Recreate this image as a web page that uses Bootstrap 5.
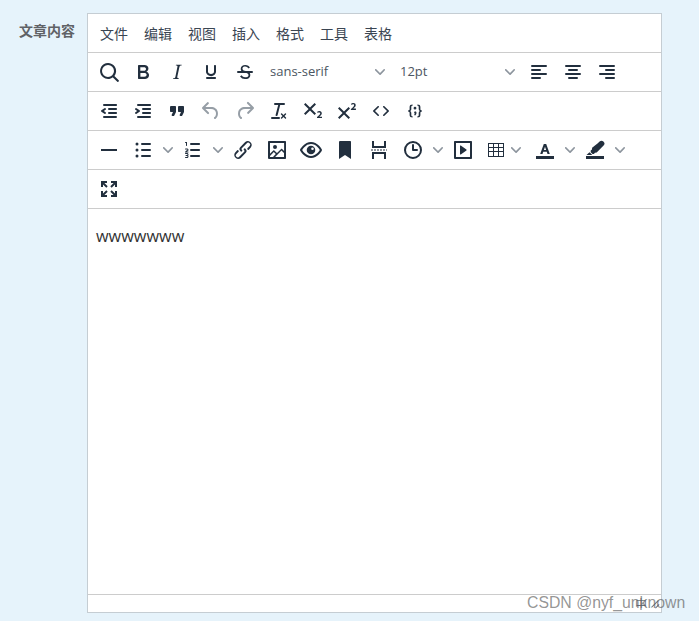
<!DOCTYPE html>
<html lang="zh">
<head>
    <meta charset="UTF-8">
    <title>文章内容</title>
    <link rel="stylesheet" href="https://cdn.jsdelivr.net/npm/bootstrap@5.3.3/dist/css/bootstrap.min.css">
    <style>
        html, body {
            height: 100%;
            overflow: hidden;
        }
        body {
            background: #e6f3fb;
            font-family: "Open Sans", "Noto Sans CJK SC", sans-serif;
            color: #222f3e;
        }
        .form-wrap {
            padding-top: 13px;
            width: 662px;
            height: 621px;
        }
        .field-label {
            width: 87px;
            flex: none;
            padding: 8px 12px 0 0;
            text-align: right;
            font-size: 14px;
            line-height: 18px;
            font-weight: 700;
            color: #606266;
            font-family: "Noto Sans CJK SC", sans-serif;
        }
        .editor-box {
            width: 575px;
            height: 600px;
            border: 1px solid #c5cdd3;
            background: #fff;
        }
        .menu-row {
            height: 39px;
            padding-left: 4px;
            border-bottom: 1px solid #ccc;
            font-family: "Noto Sans CJK SC", sans-serif;
            font-size: 14px;
            color: #3a4552;
        }
        .menu-row span {
            padding: 0 8px;
            line-height: 38px;
            width: 44px;
        }
        .tool-row {
            height: 39px;
            padding-left: 4px;
            border-bottom: 1px solid #ccc;
        }
        .tool {
            width: 34px;
            height: 38px;
            flex: none;
        }
        .tool svg {
            width: 24px;
            height: 24px;
            fill: #222f3e;
        }
        .tool.off svg {
            fill: #969ea6;
        }
        .caret-btn {
            width: 16px;
            height: 38px;
            flex: none;
        }
        .caret-btn svg, .font-pick svg {
            width: 10px;
            height: 10px;
            fill: #8d959e;
        }
        .font-pick {
            width: 130px;
            height: 38px;
            flex: none;
            padding: 0 7px 0 8px;
            font-size: 13px;
            color: #4b5662;
        }
        .table-pick {
            width: 48px;
            padding: 0 4px;
        }
        .table-pick svg.grid {
            width: 24px;
            height: 24px;
        }
        .table-pick .caret-btn {
            width: 16px;
        }
        .edit-area {
            padding: 16px 8px;
            font-size: 16.3px;
            line-height: 22px;
            color: #333;
        }
        .status-row {
            height: 18px;
            border-top: 1px solid #ccc;
            padding-right: 1px;
            font-family: "Noto Sans CJK SC", sans-serif;
            font-size: 12px;
            line-height: 16px;
            color: #6b7480;
        }
        .status-word {
            margin-right: 3px;
        }
        .status-row svg {
            width: 10px;
            height: 10px;
            fill: #6b7480;
        }
        .watermark {
            position: absolute;
            left: 527px;
            top: 594px;
            font-family: "Liberation Sans", sans-serif;
            font-size: 15.8px;
            line-height: 18px;
            color: rgba(90, 90, 90, .65);
            white-space: nowrap;
        }
    </style>
</head>
<body>
    <div class="form-wrap d-flex">
        <label class="field-label">文章内容</label>
        <div class="editor-box d-flex flex-column">
            <div class="menu-row d-flex flex-shrink-0">
                <span>文件</span><span>编辑</span><span>视图</span><span>插入</span><span>格式</span><span>工具</span><span>表格</span>
            </div>

            <div class="tool-row d-flex flex-shrink-0">
                <div class="tool d-flex align-items-center justify-content-center"><svg viewBox="0 0 24 24"><path d="M16 17.3a8 8 0 1 1 1.4-1.4l4.3 4.4a1 1 0 0 1-1.4 1.4l-4.4-4.3zm-5-.3a6 6 0 1 0 0-12 6 6 0 0 0 0 12z"/></svg></div>
                <div class="tool d-flex align-items-center justify-content-center"><svg viewBox="0 0 24 24"><path d="M7.8 19c-.3 0-.5 0-.6-.2l-.2-.5V5.7c0-.2 0-.4.2-.5l.6-.2h5c1.5 0 2.7.3 3.5 1 .7.6 1.1 1.4 1.1 2.5a3 3 0 0 1-.6 1.9c-.4.6-1 1-1.6 1.2.4.1.9.3 1.3.6s.8.7 1 1.2c.4.4.5 1 .5 1.6 0 1.3-.4 2.3-1.3 3-.8.7-2.1 1-3.8 1H7.8zm5-8.3c.6 0 1.2-.1 1.6-.5.4-.3.6-.7.6-1.3 0-1.1-.8-1.7-2.3-1.7H9.3v3.5h3.4zm.5 6c.7 0 1.3-.1 1.7-.4.4-.4.6-.9.6-1.5s-.2-1-.7-1.4c-.4-.3-1-.4-2-.4H9.4v3.8h4z"/></svg></div>
                <div class="tool d-flex align-items-center justify-content-center"><svg viewBox="0 0 24 24"><path d="M16.7 4.7l-.1.9h-.3c-.6 0-1 0-1.4.3-.3.3-.4.6-.5 1.1l-2.1 9.8v.6c0 .5.4.8 1.4.8h.2l-.2.8H8l.2-.8h.2c1.1 0 1.8-.5 2-1.5l2-9.8.1-.5c0-.6-.4-.8-1.4-.8h-.3l.2-.9h5.8z"/></svg></div>
                <div class="tool d-flex align-items-center justify-content-center"><svg viewBox="0 0 24 24"><path d="M16 5c.6 0 1 .4 1 1v5.5a4 4 0 0 1-.4 1.8l-1 1.4a5.3 5.3 0 0 1-5.5 1 5 5 0 0 1-1.6-1c-.5-.4-.8-.9-1.1-1.4a4 4 0 0 1-.4-1.8V6c0-.6.4-1 1-1s1 .4 1 1v5.5c0 .3 0 .6.2 1l.6.7a3.3 3.3 0 0 0 2.2.8 3.4 3.4 0 0 0 2.2-.8c.3-.2.4-.5.6-.8l.2-.9V6c0-.6.4-1 1-1zM8 17h8c.6 0 1 .4 1 1s-.4 1-1 1H8a1 1 0 0 1 0-2z"/></svg></div>
                <div class="tool d-flex align-items-center justify-content-center"><svg viewBox="0 0 24 24"><path d="M15.6 8.5c-.5-.7-1-1.1-1.3-1.3-.6-.4-1.3-.6-2-.6-2.7 0-2.8 1.7-2.8 2.1 0 1.6 1.8 2 3.2 2.3 4.4.9 4.6 2.8 4.6 3.9 0 1.4-.7 4.1-5 4.1A6.2 6.2 0 0 1 7 16.4l1.5-1.1c.4.6 1.6 2 3.7 2 1.6 0 2.5-.4 3-1 .3-.4.3-.9.3-1.2 0-1.4-1.4-1.9-3.2-2.3-2.8-.6-4.6-1.6-4.6-3.9 0-2.5 2-4 4.6-4 1 0 2 .3 2.900.8.6.4 1.100 1 1.700 1.800z"/><path d="M5 11h14a1 1 0 0 1 0 2H5a1 1 0 0 1 0-2z"/></svg></div>
                <div class="font-pick d-flex align-items-center justify-content-between"><span>sans-serif</span><svg viewBox="0 0 10 10"><path d="M8.700 2.200c.3-.3.8-.3 1 0 .4.4.4.9 0 1.200L5.700 7.800c-.3.3-.9.3-1.200 0L.2 3.400a.8.8 0 0 1 0-1.200c.3-.3.8-.3 1.100 0L5 6l3.700-3.800z"/></svg></div>
                <div class="font-pick d-flex align-items-center justify-content-between"><span>12pt</span><svg viewBox="0 0 10 10"><path d="M8.700 2.200c.3-.3.8-.3 1 0 .4.4.4.9 0 1.200L5.700 7.800c-.3.3-.9.3-1.200 0L.2 3.400a.8.8 0 0 1 0-1.200c.3-.3.8-.3 1.100 0L5 6l3.700-3.800z"/></svg></div>
                <div class="tool d-flex align-items-center justify-content-center"><svg viewBox="0 0 24 24"><path d="M5 5h14a1 1 0 0 1 0 2H5a1 1 0 1 1 0-2zm0 4h8a1 1 0 0 1 0 2H5a1 1 0 0 1 0-2zm0 4h14a1 1 0 0 1 0 2H5a1 1 0 0 1 0-2zm0 4h8a1 1 0 0 1 0 2H5a1 1 0 0 1 0-2z"/></svg></div>
                <div class="tool d-flex align-items-center justify-content-center"><svg viewBox="0 0 24 24"><path d="M5 5h14a1 1 0 0 1 0 2H5a1 1 0 1 1 0-2zm3 4h8a1 1 0 0 1 0 2H8a1 1 0 1 1 0-2zm-3 4h14a1 1 0 0 1 0 2H5a1 1 0 0 1 0-2zm3 4h8a1 1 0 0 1 0 2H8a1 1 0 0 1 0-2z"/></svg></div>
                <div class="tool d-flex align-items-center justify-content-center"><svg viewBox="0 0 24 24"><path d="M5 5h14a1 1 0 0 1 0 2H5a1 1 0 1 1 0-2zm6 4h8a1 1 0 0 1 0 2h-8a1 1 0 0 1 0-2zm-6 4h14a1 1 0 0 1 0 2H5a1 1 0 0 1 0-2zm6 4h8a1 1 0 0 1 0 2h-8a1 1 0 0 1 0-2z"/></svg></div>
            </div>

            <div class="tool-row d-flex flex-shrink-0">
                <div class="tool d-flex align-items-center justify-content-center"><svg viewBox="0 0 24 24"><path d="M7 5h12c.6 0 1 .4 1 1s-.4 1-1 1H7a1 1 0 1 1 0-2zm5 4h7c.6 0 1 .4 1 1s-.4 1-1 1h-7a1 1 0 0 1 0-2zm0 4h7c.6 0 1 .4 1 1s-.4 1-1 1h-7a1 1 0 0 1 0-2zm-5 4h12a1 1 0 0 1 0 2H7a1 1 0 0 1 0-2zm1.600-3.800a1 1 0 0 1-1.200 1.600l-3-2a1 1 0 0 1 0-1.600l3-2a1 1 0 0 1 1.200 1.600L6.800 12l1.800 1.200z"/></svg></div>
                <div class="tool d-flex align-items-center justify-content-center"><svg viewBox="0 0 24 24"><path d="M7 5h12c.6 0 1 .4 1 1s-.4 1-1 1H7a1 1 0 1 1 0-2zm5 4h7c.6 0 1 .4 1 1s-.4 1-1 1h-7a1 1 0 0 1 0-2zm0 4h7c.6 0 1 .4 1 1s-.4 1-1 1h-7a1 1 0 0 1 0-2zm-5 4h12a1 1 0 0 1 0 2H7a1 1 0 0 1 0-2zm-2.600-3.800L6.200 12l-1.800-1.200a1 1 0 0 1 1.200-1.600l3 2a1 1 0 0 1 0 1.600l-3 2a1 1 0 1 1-1.200-1.600z"/></svg></div>
                <div class="tool d-flex align-items-center justify-content-center"><svg viewBox="0 0 24 24"><path d="M7.500 17h.9c.4 0 .7-.2.9-.6L11 13V8c0-.6-.4-1-1-1H6a1 1 0 0 0-1 1v4c0 .6.4 1 1 1h2l-1.300 2.700a1 1 0 0 0 .8 1.300zm8 0h.9c.4 0 .7-.2.9-.6L19 13V8c0-.6-.4-1-1-1h-4a1 1 0 0 0-1 1v4c0 .6.4 1 1 1h2l-1.300 2.700a1 1 0 0 0 .8 1.300z"/></svg></div>
                <div class="tool off d-flex align-items-center justify-content-center"><svg viewBox="0 0 24 24"><path d="M6.400 8H12c3.700 0 6.200 2 6.800 5.100.6 2.700-.4 5.600-2.300 6.800a1 1 0 0 1-1-1.800c1.100-.6 1.800-2.700 1.400-4.600-.5-2.100-2.100-3.500-4.900-3.500H6.400l3.300 3.300a1 1 0 1 1-1.400 1.400l-5-5a1 1 0 0 1 0-1.400l5-5a1 1 0 0 1 1.400 1.400L6.400 8z"/></svg></div>
                <div class="tool off d-flex align-items-center justify-content-center"><svg viewBox="0 0 24 24"><path d="M17.600 10H12c-2.800 0-4.400 1.400-4.900 3.500-.4 2 .3 4 1.400 4.600a1 1 0 1 1-1 1.800c-2-1.200-2.900-4.100-2.300-6.800.6-3 3-5.100 6.800-5.100h5.600l-3.300-3.300a1 1 0 1 1 1.400-1.400l5 5a1 1 0 0 1 0 1.400l-5 5a1 1 0 0 1-1.400-1.400l3.300-3.300z"/></svg></div>
                <div class="tool d-flex align-items-center justify-content-center"><svg viewBox="0 0 24 24"><path d="M13.200 6l-2.600 10.200a1 1 0 0 1-1 .8h-.2a.8.8 0 0 1-.8-1l2.600-10H8a1 1 0 1 1 0-2h9a1 1 0 0 1 0 2h-3.800zM5 18h7a1 1 0 0 1 0 2H5a1 1 0 0 1 0-2zm13 1.500L16.500 18 15 19.500a.7.7 0 0 1-1-1l1.500-1.500-1.500-1.500a.7.7 0 0 1 1-1l1.500 1.500 1.500-1.500a.7.7 0 0 1 1 1L17.500 17l1.500 1.500a.7.7 0 0 1-1 1z"/></svg></div>
                <div class="tool d-flex align-items-center justify-content-center"><svg viewBox="0 0 24 24"><path d="M10.400 10l4.600 4.600-1.400 1.400L9 11.400 4.400 16 3 14.600 7.600 10 3 5.400 4.400 4 9 8.600 13.600 4 15 5.400 10.400 10zM21 19h-5v-1l1-.8 1.700-1.600c.3-.4.5-.8.5-1.200 0-.3 0-.6-.2-.7-.2-.2-.5-.3-.9-.3a2 2 0 0 0-.8.2l-.7.3-.4-1.100 1-.6 1.200-.2c.8 0 1.400.3 1.800.7.4.4.6.9.6 1.500s-.2 1.100-.5 1.600a8 8 0 0 1-1.300 1.300l-.6.6h2.600V19z"/></svg></div>
                <div class="tool d-flex align-items-center justify-content-center"><svg viewBox="0 0 24 24"><path d="M15 9.400L10.400 14l4.600 4.600-1.400 1.400L9 15.400 4.400 20 3 18.600 7.600 14 3 9.400 4.400 8 9 12.600 13.600 8 15 9.400zm5.900 1.600h-5v-1l1-.8 1.700-1.600c.3-.5.5-.9.5-1.300 0-.3 0-.5-.2-.7-.2-.2-.5-.3-.9-.3l-.8.2-.7.4-.4-1.200c.2-.2.5-.4 1-.5.3-.2.8-.2 1.200-.2.8 0 1.400.2 1.800.6.4.4.6 1 .6 1.600 0 .5-.2 1-.5 1.500l-1.300 1.400-.6.500h2.600V11z"/></svg></div>
                <div class="tool d-flex align-items-center justify-content-center"><svg viewBox="0 0 24 24"><path d="M9.800 15.700c.3.3.3.8 0 1-.3.4-.9.4-1.200 0l-4.400-4.100a.8.8 0 0 1 0-1.200l4.400-4.200c.3-.3.9-.3 1.200 0 .3.3.3.8 0 1.100L6 12l3.800 3.700zm4.400 0L18 12l-3.800-3.700a.8.8 0 0 1 0-1.100c.3-.3.9-.3 1.200 0l4.400 4.200c.3.3.3.9 0 1.200l-4.400 4.100c-.3.4-.9.4-1.200 0a.8.8 0 0 1 0-1z"/></svg></div>
                <div class="tool d-flex align-items-center justify-content-center"><svg viewBox="0 0 24 24"><path d="M9.600 5.500v1.300c-1 0-1.300.3-1.300 1.200v1.900c0 1-.4 1.700-1.200 2.100.8.400 1.200 1.100 1.200 2.100V16c0 .9.300 1.200 1.300 1.200v1.300c-2.100 0-3-.8-3-2.500v-1.900c0-1-.4-1.400-1.500-1.500v-1.200c1.100-.1 1.500-.5 1.500-1.500V8c0-1.700.9-2.500 3-2.500zm4.800 0c2.100 0 3 .8 3 2.500v1.900c0 1 .4 1.400 1.500 1.500v1.200c-1.100.1-1.500.5-1.500 1.500V16c0 1.700-.9 2.500-3 2.500v-1.300c1 0 1.300-.3 1.300-1.200v-1.900c0-1 .4-1.700 1.200-2.100-.8-.4-1.200-1.100-1.200-2.100V8c0-.9-.3-1.200-1.300-1.200V5.500zM12 7.800a1.400 1.400 0 1 1 0 2.800 1.400 1.400 0 0 1 0-2.800zm0 4.400a1.500 1.500 0 0 1 1.500 1.500c0 1-.5 2.100-1.400 2.900l-1-.5c.3-.5.500-1 .6-1.500a1.500 1.500 0 0 1 .3-2.400z"/></svg></div>
            </div>

            <div class="tool-row d-flex flex-shrink-0">
                <div class="tool d-flex align-items-center justify-content-center"><svg viewBox="0 0 24 24"><path d="M4 11h16v2H4z"/></svg></div>
                <div class="tool d-flex align-items-center justify-content-center"><svg viewBox="0 0 24 24"><path d="M11 5h8a1 1 0 0 1 0 2h-8a1 1 0 0 1 0-2zm0 6h8a1 1 0 0 1 0 2h-8a1 1 0 0 1 0-2zm0 6h8a1 1 0 0 1 0 2h-8a1 1 0 0 1 0-2z"/><circle cx="6" cy="6" r="1.500"/><circle cx="6" cy="12" r="1.500"/><circle cx="6" cy="18" r="1.500"/></svg></div>
                <div class="caret-btn d-flex align-items-center justify-content-center"><svg viewBox="0 0 10 10"><path d="M8.700 2.200c.3-.3.8-.3 1 0 .4.4.4.9 0 1.200L5.700 7.800c-.3.3-.9.3-1.200 0L.2 3.400a.8.8 0 0 1 0-1.200c.3-.3.8-.3 1.100 0L5 6l3.700-3.800z"/></svg></div>
                <div class="tool d-flex align-items-center justify-content-center"><svg viewBox="0 0 24 24"><path d="M10 17h8c.6 0 1 .4 1 1s-.4 1-1 1h-8a1 1 0 0 1 0-2zm0-6h8c.6 0 1 .4 1 1s-.4 1-1 1h-8a1 1 0 0 1 0-2zm0-6h8c.6 0 1 .4 1 1s-.4 1-1 1h-8a1 1 0 1 1 0-2zM6 4v3.500c0 .3-.2.500-.5.500a.5.500 0 0 1-.5-.5V5h-.5a.5.500 0 0 1 0-1H6zm-1 8.800l.2-.2 1.100-.4a.5.500 0 0 0 .2-.2.500.500 0 0 0-.5-.5h-1.500a.5.500 0 1 1 0-1H6c.8 0 1.500.6 1.500 1.400 0 .5-.3 1-.8 1.200l-1 .4H7a.5.500 0 1 1 0 1H4.500a.5.500 0 0 1-.5-.5zM7.500 18.500c0 .8-.6 1.500-1.400 1.500H4.500a.5.500 0 1 1 0-1H6a.5.500 0 1 0 0-1H5a.5.500 0 1 1 0-1h1a.5.500 0 1 0 0-1H4.500a.5.500 0 1 1 0-1H6c.8 0 1.500.7 1.500 1.500 0 .4-.1.700-.4 1 .3.300.4.600.4 1z"/></svg></div>
                <div class="caret-btn d-flex align-items-center justify-content-center"><svg viewBox="0 0 10 10"><path d="M8.700 2.200c.3-.3.8-.3 1 0 .4.4.4.9 0 1.200L5.700 7.800c-.3.3-.9.3-1.200 0L.2 3.400a.8.8 0 0 1 0-1.200c.3-.3.8-.3 1.100 0L5 6l3.700-3.800z"/></svg></div>
                <div class="tool d-flex align-items-center justify-content-center"><svg viewBox="0 0 24 24"><path d="M6.200 12.300a1 1 0 0 1 1.400 1.400l-2 2a2 2 0 1 0 2.800 2.800l4.800-4.800a1 1 0 0 0 0-1.400 1 1 0 1 1 1.400-1.300 2.900 2.900 0 0 1 0 4.100L9.800 20a4 4 0 0 1-5.600-5.600l2-2.100zm11.600-.6a1 1 0 0 1-1.400-1.400l2-2a2 2 0 1 0-2.800-2.800L10.800 10.300a1 1 0 0 0 0 1.400 1 1 0 1 1-1.400 1.300 2.900 2.900 0 0 1 0-4.100L14.200 4a4 4 0 0 1 5.600 5.600l-2 2.100z"/></svg></div>
                <div class="tool d-flex align-items-center justify-content-center"><svg viewBox="0 0 24 24"><path d="M5 15.700l3.300-3.200c.3-.3.7-.3 1 0L12 15l4.100-4c.3-.4.8-.4 1 0l2 1.900V5H5v10.700zM5 18v1h3l2.800-2.900-2-2L5 17.900zm14-3l-2.500-2.400-6.400 6.500H19v-4zM4 3h16c.6 0 1 .4 1 1v16c0 .6-.4 1-1 1H4a1 1 0 0 1-1-1V4c0-.6.4-1 1-1zm6 8a2 2 0 1 0 0-4 2 2 0 0 0 0 4z"/></svg></div>
                <div class="tool d-flex align-items-center justify-content-center"><svg viewBox="0 0 24 24"><path fill-rule="evenodd" d="M1.100 11.500l.7-1.200L4 7.800C6.200 5.400 8.900 4 12 4c3 0 5.800 1.400 8.100 3.800a18.200 18.200 0 0 1 2.800 3.700v1l-.7 1.200-2.100 2.500c-2.300 2.400-5 3.800-8.100 3.800-3 0-5.800-1.400-8.100-3.800a18.200 18.200 0 0 1-2.800-3.700 1 1 0 0 1 0-1zm2.400 1c.5.800 1.100 1.600 1.800 2.300 2 2 4.200 3.200 6.700 3.200s4.700-1.200 6.700-3.200a16.200 16.200 0 0 0 2.100-2.800 15.700 15.700 0 0 0-2.100-2.800c-2-2-4.200-3.200-6.700-3.200a9.300 9.300 0 0 0-6.700 3.200A16.200 16.200 0 0 0 3.200 12c0 .2.2.3.3.5zM12 7.700a4.300 4.300 0 1 1 0 8.600 4.300 4.300 0 0 1 0-8.600zm1.500 1.800a1.300 1.300 0 1 0 0 2.600 1.300 1.300 0 0 0 0-2.600z"/></svg></div>
                <div class="tool d-flex align-items-center justify-content-center"><svg viewBox="0 0 24 24"><path d="M6 4v17l6-4 6 4V4c0-.6-.4-1-1-1H7a1 1 0 0 0-1 1z"/></svg></div>
                <div class="tool d-flex align-items-center justify-content-center"><svg viewBox="0 0 24 24"><path d="M5 3h2v5h10V3h2v7H5V3zM5 21h2v-5h10v5h2v-7H5v7zM4 11.500h2v1H4zm3 0h2v1H7zm3 0h2v1h-2zm3 0h2v1h-2zm3 0h2v1h-2zm3 0h1v1h-1z"/></svg></div>
                <div class="tool d-flex align-items-center justify-content-center"><svg viewBox="0 0 24 24"><path d="M12 19a7 7 0 1 0 0-14 7 7 0 0 0 0 14zm0 2a9 9 0 1 1 0-18 9 9 0 0 1 0 18z"/><path d="M11 7a1 1 0 0 1 2 0v4h3a1 1 0 0 1 0 2h-4a1 1 0 0 1-1-1V7z"/></svg></div>
                <div class="caret-btn d-flex align-items-center justify-content-center"><svg viewBox="0 0 10 10"><path d="M8.700 2.200c.3-.3.8-.3 1 0 .4.4.4.9 0 1.200L5.700 7.800c-.3.3-.9.3-1.200 0L.2 3.400a.8.8 0 0 1 0-1.200c.3-.3.8-.3 1.100 0L5 6l3.700-3.800z"/></svg></div>
                <div class="tool d-flex align-items-center justify-content-center"><svg viewBox="0 0 24 24"><path d="M4 3h16c.6 0 1 .4 1 1v16c0 .6-.4 1-1 1H4a1 1 0 0 1-1-1V4c0-.6.4-1 1-1zm1 2v14h14V5H5zm4.800 2.600l5.600 4a.5.5 0 0 1 0 .8l-5.600 4A.5.5 0 0 1 9 16V8a.5.5 0 0 1 .8-.4z"/></svg></div>
                <div class="tool table-pick d-flex align-items-center"><svg class="grid" viewBox="0 0 24 24"><path d="M4 5h16v14H4V5zm1 1v3h4V6H5zm5 0v3h4V6h-4zm5 0v3h4V6h-4zM5 10v3h4v-3H5zm5 0v3h4v-3h-4zm5 0v3h4v-3h-4zM5 14v4h4v-4H5zm5 0v4h4v-4h-4zm5 0v4h4v-4h-4z" fill-rule="evenodd"/></svg><div class="caret-btn d-flex align-items-center justify-content-center"><svg viewBox="0 0 10 10"><path d="M8.700 2.200c.3-.3.8-.3 1 0 .4.4.4.9 0 1.200L5.700 7.800c-.3.3-.9.3-1.200 0L.2 3.400a.8.8 0 0 1 0-1.200c.3-.3.8-.3 1.100 0L5 6l3.700-3.800z"/></svg></div></div>
                <div class="tool d-flex align-items-center justify-content-center"><svg viewBox="0 0 24 24"><path d="M3 18h18v3H3z"/><path fill-rule="evenodd" d="M10.800 6h2.400l3.600 10h-2.300l-.7-2.200h-3.600L9.500 16H7.200l3.600-10zm1.200 2.800l-1.100 3.300h2.200L12 8.800z"/></svg></div>
                <div class="caret-btn d-flex align-items-center justify-content-center"><svg viewBox="0 0 10 10"><path d="M8.700 2.200c.3-.3.8-.3 1 0 .4.4.4.9 0 1.200L5.700 7.800c-.3.3-.9.3-1.200 0L.2 3.400a.8.8 0 0 1 0-1.200c.3-.3.8-.3 1.100 0L5 6l3.700-3.800z"/></svg></div>
                <div class="tool d-flex align-items-center justify-content-center"><svg viewBox="0 0 24 24"><path d="M3 18h18v3H3z"/><path d="M14.800 5.200l1.800-1.600a2.700 2.700 0 0 1 3.800 0l.2.200a2.700 2.700 0 0 1 0 3.800l-6.900 7-1.700.1-1.100 1.300H9.500l-1.800-1.800v-1.600l1.300-1.100.1-1.700 5.700-4.600zM6.500 14.200L9.300 17H3.500l3-2.800z"/></svg></div>
                <div class="caret-btn d-flex align-items-center justify-content-center"><svg viewBox="0 0 10 10"><path d="M8.700 2.200c.3-.3.8-.3 1 0 .4.4.4.9 0 1.200L5.700 7.800c-.3.3-.9.3-1.200 0L.2 3.400a.8.8 0 0 1 0-1.200c.3-.3.8-.3 1.100 0L5 6l3.700-3.800z"/></svg></div>
            </div>

            <div class="tool-row d-flex flex-shrink-0">
                <div class="tool d-flex align-items-center justify-content-center"><svg viewBox="0 0 24 24"><path d="M4 4h6v2H7.400l3.300 3.300-1.400 1.400L6 7.400V10H4V4zm10 0h6v6h-2V7.400l-3.300 3.300-1.400-1.400L16.600 6H14V4zM9.300 13.300l1.400 1.400L7.400 18H10v2H4v-6h2v2.600l3.300-3.300zm5.400 0l3.300 3.300V14h2v6h-6v-2h2.600l-3.300-3.300 1.400-1.400z"/></svg></div>
            </div>

            <div class="edit-area flex-grow-1">wwwwwww</div>

            <div class="status-row d-flex justify-content-end align-items-center flex-shrink-0">
                <span class="status-word">中</span>
                <svg viewBox="0 0 10 10"><path d="M8.100 1.100l.7.7-7 7-.7-.7zM8.800 5.100l.7.7-3.700 3.700-.7-.7z"/></svg>
            </div>
        </div>
    </div>
    <div class="watermark">CSDN @nyf_unknown</div>
    <script src="https://cdn.jsdelivr.net/npm/bootstrap@5.3.3/dist/js/bootstrap.bundle.min.js"></script>
</body>
</html>
